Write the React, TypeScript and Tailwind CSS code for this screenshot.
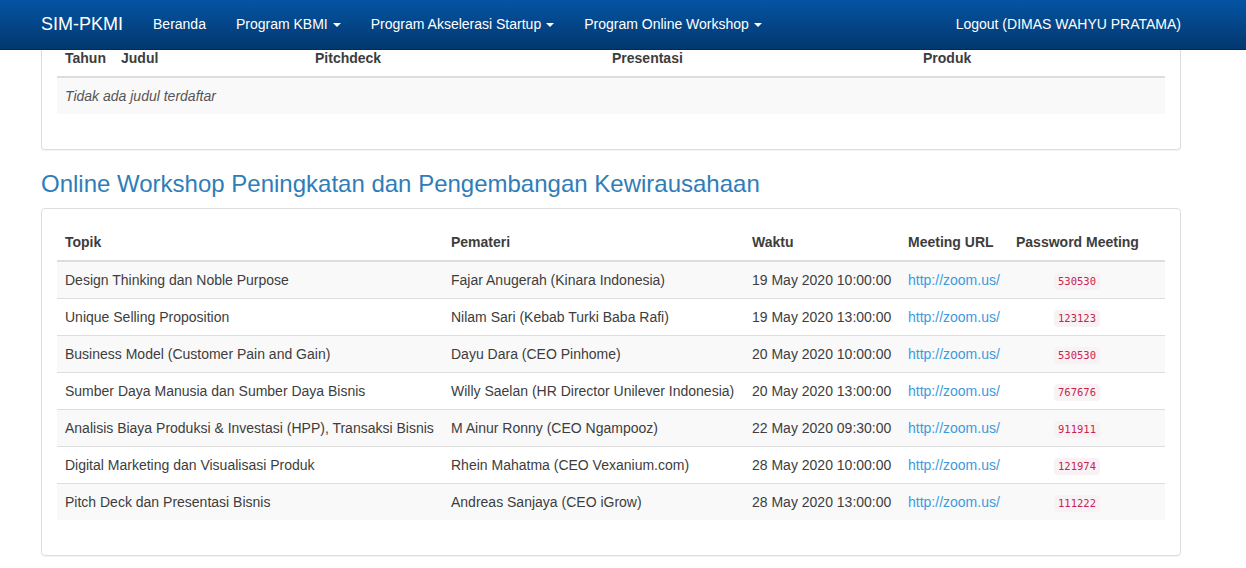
import React from 'react';

const workshops = [
  ['Design Thinking dan Noble Purpose', 'Fajar Anugerah (Kinara Indonesia)', '19 May 2020 10:00:00', '530530'],
  ['Unique Selling Proposition', 'Nilam Sari (Kebab Turki Baba Rafi)', '19 May 2020 13:00:00', '123123'],
  ['Business Model (Customer Pain and Gain)', 'Dayu Dara (CEO Pinhome)', '20 May 2020 10:00:00', '530530'],
  ['Sumber Daya Manusia dan Sumber Daya Bisnis', 'Willy Saelan (HR Director Unilever Indonesia)', '20 May 2020 13:00:00', '767676'],
  ['Analisis Biaya Produksi & Investasi (HPP), Transaksi Bisnis', 'M Ainur Ronny (CEO Ngampooz)', '22 May 2020 09:30:00', '911911'],
  ['Digital Marketing dan Visualisasi Produk', 'Rhein Mahatma (CEO Vexanium.com)', '28 May 2020 10:00:00', '121974'],
  ['Pitch Deck dan Presentasi Bisnis', 'Andreas Sanjaya (CEO iGrow)', '28 May 2020 13:00:00', '111222'],
];

function Caret() {
  return <span className="inline-block ml-[5px] align-middle w-0 h-0 border-x-[4px] border-x-transparent border-t-[4px] border-t-white" />;
}

export default function App() {
  return (
    <div className="min-h-[568px] bg-white text-[14px] leading-5 text-[#3d3d3d]" style={{ fontFamily: '"Liberation Sans", Arial, sans-serif' }}>
      {/* navbar */}
      <nav className="h-[50px] bg-gradient-to-b from-[#0454a3] to-[#03386f] border-b border-[#022b57]">
        <div className="ml-[41px] w-[1140px] h-full flex items-center pb-[2px] text-white">
          <span className="text-[18px] mr-[15px]">SIM-PKMI</span>
          <span className="px-[15px]">Beranda</span>
          <span className="px-[15px]">Program KBMI<Caret /></span>
          <span className="px-[15px]">Program Akselerasi Startup<Caret /></span>
          <span className="px-[15px]">Program Online Workshop<Caret /></span>
          <span className="ml-auto">Logout (DIMAS WAHYU PRATAMA)</span>
        </div>
      </nav>

      <div className="ml-[41px] w-[1140px]">
        {/* top panel, scrolled partly under the navbar */}
        <div className="border border-t-0 border-[#ddd] rounded-b-[4px] shadow-[0_1px_1px_rgba(0,0,0,0.05)] px-[15px] pb-[15px]">
          <table className="w-[1108px] table-fixed border-collapse mb-5">
            <colgroup>
              <col className="w-[56px]" />
              <col className="w-[194px]" />
              <col className="w-[297px]" />
              <col className="w-[311px]" />
              <col className="w-[250px]" />
            </colgroup>
            <thead>
              <tr className="border-b-2 border-[#ddd]">
                <th className="text-left font-bold px-2 pt-0 pb-[10px] leading-4">Tahun</th>
                <th className="text-left font-bold px-2 pt-0 pb-[10px] leading-4">Judul</th>
                <th className="text-left font-bold px-2 pt-0 pb-[10px] leading-4">Pitchdeck</th>
                <th className="text-left font-bold px-2 pt-0 pb-[10px] leading-4">Presentasi</th>
                <th className="text-left font-bold px-2 pt-0 pb-[10px] leading-4">Produk</th>
              </tr>
            </thead>
            <tbody>
              <tr className="bg-[#f9f9f9]">
                <td colSpan={5} className="p-2 italic text-[#555]">Tidak ada judul terdaftar</td>
              </tr>
            </tbody>
          </table>
        </div>

        <h3 className="mt-5 mb-[10px] text-[24px] leading-[28px] text-[#2f7db8]">
          Online Workshop Peningkatan dan Pengembangan Kewirausahaan
        </h3>

        <div className="border border-[#ddd] rounded-[4px] shadow-[0_1px_1px_rgba(0,0,0,0.05)] p-[15px]">
          <table className="w-[1108px] table-fixed border-collapse mb-5">
            <colgroup>
              <col className="w-[386px]" />
              <col className="w-[301px]" />
              <col className="w-[156px]" />
              <col className="w-[108px]" />
              <col className="w-[157px]" />
            </colgroup>
            <thead>
              <tr className="border-b-2 border-[#ddd]">
                <th className="text-left font-bold p-2">Topik</th>
                <th className="text-left font-bold p-2">Pemateri</th>
                <th className="text-left font-bold p-2">Waktu</th>
                <th className="text-left font-bold p-2 whitespace-nowrap">Meeting URL</th>
                <th className="text-left font-bold p-2 whitespace-nowrap">Password Meeting</th>
              </tr>
            </thead>
            <tbody>
              {workshops.map((w, i) => (
                <tr key={i} className={`${i > 0 ? 'border-t border-[#ddd]' : ''} ${i % 2 === 0 ? 'bg-[#f9f9f9]' : ''}`}>
                  <td className="p-2 whitespace-nowrap">{w[0]}</td>
                  <td className="p-2 whitespace-nowrap">{w[1]}</td>
                  <td className="p-2 whitespace-nowrap">{w[2]}</td>
                  <td className="p-2 whitespace-nowrap"><a className="text-[#3b9be0]">http://zoom.us/</a></td>
                  <td className="p-2">
                    <div className="w-[122px] h-5 flex justify-center items-start">
                      <span className="mt-[3px] h-[17px] px-1 leading-[17px] rounded-[4px] bg-[#f9f2f4] text-[#c7254e] text-[10.5px]" style={{ fontFamily: '"DejaVu Sans Mono", monospace' }}>{w[3]}</span>
                    </div>
                  </td>
                </tr>
              ))}
            </tbody>
          </table>
        </div>
      </div>
    </div>
  );
}
